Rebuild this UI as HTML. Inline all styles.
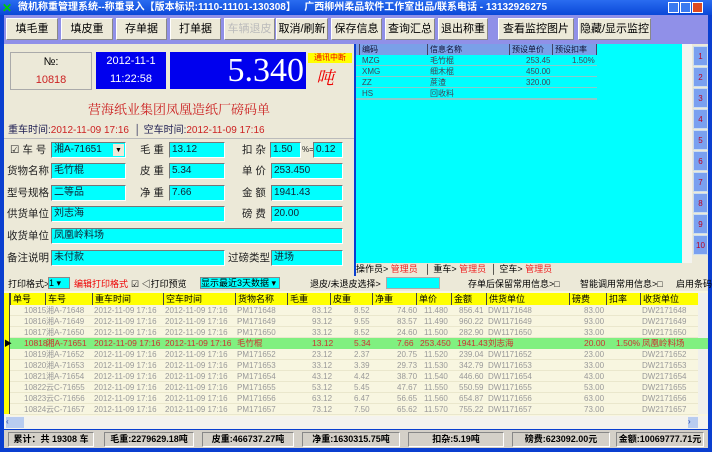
<!DOCTYPE html>
<html><head><meta charset="utf-8">
<style>
*{margin:0;padding:0;box-sizing:border-box;white-space:nowrap}
body{width:712px;height:452px;overflow:hidden;background:#0a3fd0;font-family:"Liberation Sans","Noto Sans CJK SC",sans-serif;font-size:11px;position:relative}
.a{position:absolute}
.title{left:0;top:0;width:712px;height:15px;background:linear-gradient(#2a6cf0,#0a48d8);color:#fff;font-weight:bold;font-size:10px;line-height:15px;padding-left:18px}
.tb{left:4px;top:15px;width:704px;height:29px;background:#9090e8}
.btn{position:absolute;top:3px;height:22px;background:#ece9d8;border:1px solid #fff;border-right-color:#888;border-bottom-color:#888;font-size:11px;line-height:20px;text-align:center}
.panel{left:4px;top:44px;width:350px;height:232px;background:#ece9d8}
.lbl{position:absolute;font-size:10.5px;color:#222;line-height:16px}
.fld{position:absolute;height:16px;background:#00ffff;border:1px solid #fff;border-top-color:#777;border-left-color:#777;font-size:10px;line-height:14px;padding-left:2px;color:#123}
.cyan{left:356px;top:44px;width:326px;height:219px;background:#00ffff}
.gh{position:absolute;top:0;height:11px;background:#7aa0e8;border-right:1px solid #446;font-size:8px;line-height:11px;padding-left:2px;color:#113}
.gr{position:absolute;font-size:8px;line-height:11px;color:#445}
.nb{position:absolute;left:693px;width:15px;height:20px;background:#7aa0f0;border:1px solid #cde;color:#b02;font-size:8px;text-align:center;line-height:20px}
.opt{left:4px;top:276px;width:704px;height:15px;background:#ece9d8;font-size:9px}
.grid{left:4px;top:291px;width:704px;height:138px;background:#f8f6e0}
.hd{position:absolute;top:2px;height:12px;background:#ffff00;border-left:1px solid #444;font-size:9px;line-height:12px;padding-left:2px}
.row{position:absolute;left:0;width:694px;height:11px;font-size:8px;color:#999;line-height:11px}
.row span{position:absolute}
.stat{left:4px;top:430px;width:704px;height:18px;background:#d4d0c8}
.sp{position:absolute;top:2px;height:15px;border:1px solid #888;border-right-color:#fff;border-bottom-color:#fff;font-weight:bold;font-size:9px;line-height:13px;text-align:center}
</style></head><body>
<div class="a title">微机称重管理系统--称重录入【版本标识:1110-11101-130308】 &nbsp;&nbsp;广西柳州柔品软件工作室出品/联系电话 - 13132926275</div>
<div class="a" style="left:2px;top:1px;color:#0c0;font-size:12px;font-weight:bold">✕</div>
<div class="a" style="left:668px;top:2px;width:40px;height:11px;"><span style="display:inline-block;width:11px;height:11px;background:#3a7af0;border:1px solid #fff;margin-right:1px"></span><span style="display:inline-block;width:11px;height:11px;background:#3a7af0;border:1px solid #fff;margin-right:1px"></span><span style="display:inline-block;width:11px;height:11px;background:#e04a20;border:1px solid #fff"></span></div>
<div class="a tb">
<div class="btn" style="left:2px;width:52px">填毛重</div>
<div class="btn" style="left:57px;width:52px">填皮重</div>
<div class="btn" style="left:112px;width:51px">存单据</div>
<div class="btn" style="left:166px;width:51px">打单据</div>
<div class="btn" style="left:220px;width:51px;color:#bbb">车辆退皮</div>
<div class="btn" style="left:272px;width:52px">取消/刷新</div>
<div class="btn" style="left:327px;width:51px">保存信息</div>
<div class="btn" style="left:381px;width:50px">查询汇总</div>
<div class="btn" style="left:434px;width:50px">退出称重</div>
<div class="btn" style="left:494px;width:76px">查看监控图片</div>
<div class="btn" style="left:574px;width:73px">隐藏/显示监控</div>
</div>
<div class="a panel">
<div style="position:absolute;left:6px;top:8px;width:82px;height:38px;border:1px solid #aaa;text-align:center;font-size:11px;line-height:18px">№:<br><span style="color:#c22">10818</span></div>
<div style="position:absolute;left:92px;top:8px;width:70px;height:37px;background:#0000ee;color:#fff;text-align:center;font-size:11px;line-height:18px">2012-11-1<br>11:22:58</div>
<div style="position:absolute;left:166px;top:8px;width:136px;height:37px;background:#0000ee;color:#fff;text-align:right;font-size:34px;line-height:37px;font-family:'Liberation Serif',serif;padding-right:2px">5.340</div>
<div style="position:absolute;left:304px;top:9px;width:44px;height:10px;background:#ff0;color:#e00;font-size:8px;line-height:10px;text-align:center">通讯中断</div>
<div style="position:absolute;left:312px;top:20px;color:#e00;font-size:18px;font-style:italic;font-family:'Noto Serif CJK SC',serif">吨</div>
<div style="position:absolute;left:0;width:350px;top:55px;text-align:center;color:#c22;font-size:13px;font-family:'Noto Serif CJK SC',serif">营海纸业集团凤凰造纸厂磅码单</div>
<div style="position:absolute;left:4px;top:77px;font-size:10px;color:#225">重车时间:<span style="color:#c22">2012-11-09 17:16</span> &nbsp;│ 空车时间:<span style="color:#c22">2012-11-09 17:16</span></div>
<div style="position:absolute;left:0;top:94px;width:350px;border-top:1px solid #bbb"></div>
</div>
<div class="lbl" style="left:10px;top:142px">☑ 车 号</div>
<div class="fld" style="left:51px;top:142px;width:75px">湘A-71651<span style="position:absolute;right:1px;top:1px;width:11px;height:12px;background:#ece9d8;color:#000;font-size:7px;text-align:center">▼</span></div>
<div class="lbl" style="left:140px;top:142px">毛 重</div><div class="fld" style="left:169px;top:142px;width:56px">13.12</div>
<div class="lbl" style="left:242px;top:142px">扣 杂</div><div class="fld" style="left:270px;top:142px;width:31px">1.50</div>
<div class="lbl" style="left:302px;top:142px;font-size:8px">%=</div><div class="fld" style="left:313px;top:142px;width:30px">0.12</div>
<div class="lbl" style="left:7px;top:163px">货物名称</div><div class="fld" style="left:51px;top:163px;width:75px">毛竹棍</div>
<div class="lbl" style="left:140px;top:163px">皮 重</div><div class="fld" style="left:169px;top:163px;width:56px">5.34</div>
<div class="lbl" style="left:242px;top:163px">单 价</div><div class="fld" style="left:271px;top:163px;width:72px">253.450</div>
<div class="lbl" style="left:7px;top:185px">型号规格</div><div class="fld" style="left:51px;top:185px;width:75px">二等品</div>
<div class="lbl" style="left:140px;top:185px">净 重</div><div class="fld" style="left:169px;top:185px;width:56px">7.66</div>
<div class="lbl" style="left:242px;top:185px">金 额</div><div class="fld" style="left:271px;top:185px;width:72px">1941.43</div>
<div class="lbl" style="left:7px;top:206px">供货单位</div><div class="fld" style="left:51px;top:206px;width:174px">刘志海</div>
<div class="lbl" style="left:242px;top:206px">磅 费</div><div class="fld" style="left:271px;top:206px;width:72px">20.00</div>
<div class="lbl" style="left:7px;top:228px">收货单位</div><div class="fld" style="left:51px;top:228px;width:292px">凤凰岭料场</div>
<div class="lbl" style="left:7px;top:250px">备注说明</div><div class="fld" style="left:51px;top:250px;width:174px">未付款</div>
<div class="lbl" style="left:228px;top:250px">过磅类型</div><div class="fld" style="left:271px;top:250px;width:72px">进场</div>

<div class="a cyan">
<div style="position:absolute;left:0;top:11px;width:241px;height:45px;border-bottom:1px solid #8cc;background:repeating-linear-gradient(transparent 0 10px,#8cc 10px 11px)"></div>
<div class="gh" style="left:0;width:4px;padding:0"></div>
<div class="gh" style="left:4px;width:68px">编码</div>
<div class="gh" style="left:72px;width:82px">信息名称</div>
<div class="gh" style="left:154px;width:43px">预设单价</div>
<div class="gh" style="left:197px;width:44px">预设扣率</div>
<div class="gr" style="left:6px;top:11px">MZG</div><div class="gr" style="left:74px;top:11px">毛竹棍</div><div class="gr" style="left:170px;top:11px">253.45</div><div class="gr" style="left:216px;top:11px">1.50%</div>
<div class="gr" style="left:6px;top:22px">XMG</div><div class="gr" style="left:74px;top:22px">细木棍</div><div class="gr" style="left:170px;top:22px">450.00</div>
<div class="gr" style="left:6px;top:33px">ZZ</div><div class="gr" style="left:74px;top:33px">蔗渣</div><div class="gr" style="left:170px;top:33px">320.00</div>
<div class="gr" style="left:6px;top:44px">HS</div><div class="gr" style="left:74px;top:44px">回收料</div>
</div>
<div class="a" style="left:682px;top:44px;width:10px;height:219px;background:#f4f4f0"></div>
<div class="a" style="left:692px;top:44px;width:16px;height:232px;background:#ece9d8"></div>
<div class="nb" style="top:46px">1</div><div class="nb" style="top:67px">2</div><div class="nb" style="top:88px">3</div><div class="nb" style="top:109px">4</div><div class="nb" style="top:130px">5</div><div class="nb" style="top:151px">6</div><div class="nb" style="top:172px">7</div><div class="nb" style="top:193px">8</div><div class="nb" style="top:214px">9</div><div class="nb" style="top:235px">10</div>
<div class="a" style="left:356px;top:263px;width:336px;height:13px;background:#ece9d8;font-size:9px;line-height:13px">操作员&gt; <span style="color:#e22">管理员</span> &nbsp; │ 重车&gt; <span style="color:#e22">管理员</span> &nbsp;│ 空车&gt; <span style="color:#e22">管理员</span></div>

<div class="a opt">
<span class="a" style="left:4px;top:1px">打印格式&gt;</span><span class="a" style="left:44px;top:1px;width:22px;height:12px;background:#0ff;border:1px solid #888;line-height:10px">1 ▾</span>
<span class="a" style="left:70px;top:1px;color:#e00">编辑打印格式</span><span class="a" style="left:127px;top:1px">☑ ◁打印预览</span>
<span class="a" style="left:196px;top:1px;width:80px;height:12px;background:#0ff;border:1px solid #888;line-height:10px">显示最近3天数据 ▾</span>
<span class="a" style="left:306px;top:1px">退皮/未退皮选择&gt;</span><span class="a" style="left:382px;top:1px;width:54px;height:12px;background:#0ff;border:1px solid #aaa"></span>
<span class="a" style="left:464px;top:1px">存单后保留常用信息&gt;□</span><span class="a" style="left:576px;top:1px">智能调用常用信息&gt;□</span><span class="a" style="left:672px;top:1px">启用条码</span>
</div>

<div class="a grid">
<div style="position:absolute;left:0;top:2px;width:6px;height:121px;background:#ff0;border-right:1px solid #444"></div>
<div class="hd" style="left:6px;width:35px">单号</div><div class="hd" style="left:41px;width:47px">车号</div><div class="hd" style="left:88px;width:71px">重车时间</div><div class="hd" style="left:159px;width:72px">空车时间</div><div class="hd" style="left:231px;width:52px">货物名称</div><div class="hd" style="left:283px;width:43px">毛重</div><div class="hd" style="left:326px;width:42px">皮重</div><div class="hd" style="left:368px;width:44px">净重</div><div class="hd" style="left:412px;width:35px">单价</div><div class="hd" style="left:447px;width:35px">金额</div><div class="hd" style="left:482px;width:83px">供货单位</div><div class="hd" style="left:565px;width:37px">磅费</div><div class="hd" style="left:602px;width:34px">扣率</div><div class="hd" style="left:636px;width:58px">收货单位</div>
<div style="position:absolute;left:694px;top:2px;width:10px;height:121px;background:#f0f0ec"></div>
<div style="position:absolute;left:6px;top:14px;width:688px;height:110px;background:repeating-linear-gradient(transparent 0 10.3px,#ddd8b8 10.3px 11px)"></div>
<div class="row" style="top:14px"><span style="left:20px">10815</span><span style="left:42px">湘A-71648</span><span style="left:90px">2012-11-09 17:16</span><span style="left:161px">2012-11-09 17:16</span><span style="left:233px">PM171648</span><span style="left:308px">83.12</span><span style="left:350px">8.52</span><span style="left:393px">74.60</span><span style="left:420px">11.480</span><span style="left:455px">856.41</span><span style="left:484px">DW1171648</span><span style="left:580px">83.00</span><span style="left:638px">DW2171648</span></div>
<div class="row" style="top:25px"><span style="left:20px">10816</span><span style="left:42px">湘A-71649</span><span style="left:90px">2012-11-09 17:16</span><span style="left:161px">2012-11-09 17:16</span><span style="left:233px">PM171649</span><span style="left:308px">93.12</span><span style="left:350px">9.55</span><span style="left:393px">83.57</span><span style="left:420px">11.490</span><span style="left:455px">960.22</span><span style="left:484px">DW1171649</span><span style="left:580px">93.00</span><span style="left:638px">DW2171649</span></div>
<div class="row" style="top:36px"><span style="left:20px">10817</span><span style="left:42px">湘A-71650</span><span style="left:90px">2012-11-09 17:16</span><span style="left:161px">2012-11-09 17:16</span><span style="left:233px">PM171650</span><span style="left:308px">33.12</span><span style="left:350px">8.52</span><span style="left:393px">24.60</span><span style="left:420px">11.500</span><span style="left:455px">282.90</span><span style="left:484px">DW1171650</span><span style="left:580px">33.00</span><span style="left:638px">DW2171650</span></div>
<div class="row" style="top:47px;left:6px;width:698px;background:#80f080;color:#c33;font-size:8.5px"><span style="left:14px">10818</span><span style="left:36px">湘A-71651</span><span style="left:84px">2012-11-09 17:16</span><span style="left:155px">2012-11-09 17:16</span><span style="left:227px">毛竹棍</span><span style="left:302px">13.12</span><span style="left:344px">5.34</span><span style="left:387px">7.66</span><span style="left:410px">253.450</span><span style="left:447px">1941.43</span><span style="left:478px">刘志海</span><span style="left:574px">20.00</span><span style="left:606px">1.50%</span><span style="left:632px">凤凰岭料场</span></div>
<div class="a" style="left:0;top:47px;width:6px;height:11px;font-size:8px;color:#000">▶</div>
<div class="row" style="top:58px"><span style="left:20px">10819</span><span style="left:42px">湘A-71652</span><span style="left:90px">2012-11-09 17:16</span><span style="left:161px">2012-11-09 17:16</span><span style="left:233px">PM171652</span><span style="left:308px">23.12</span><span style="left:350px">2.37</span><span style="left:393px">20.75</span><span style="left:420px">11.520</span><span style="left:455px">239.04</span><span style="left:484px">DW1171652</span><span style="left:580px">23.00</span><span style="left:638px">DW2171652</span></div>
<div class="row" style="top:69px"><span style="left:20px">10820</span><span style="left:42px">湘A-71653</span><span style="left:90px">2012-11-09 17:16</span><span style="left:161px">2012-11-09 17:16</span><span style="left:233px">PM171653</span><span style="left:308px">33.12</span><span style="left:350px">3.39</span><span style="left:393px">29.73</span><span style="left:420px">11.530</span><span style="left:455px">342.79</span><span style="left:484px">DW1171653</span><span style="left:580px">33.00</span><span style="left:638px">DW2171653</span></div>
<div class="row" style="top:80px"><span style="left:20px">10821</span><span style="left:42px">湘A-71654</span><span style="left:90px">2012-11-09 17:16</span><span style="left:161px">2012-11-09 17:16</span><span style="left:233px">PM171654</span><span style="left:308px">43.12</span><span style="left:350px">4.42</span><span style="left:393px">38.70</span><span style="left:420px">11.540</span><span style="left:455px">446.60</span><span style="left:484px">DW1171654</span><span style="left:580px">43.00</span><span style="left:638px">DW2171654</span></div>
<div class="row" style="top:91px"><span style="left:20px">10822</span><span style="left:42px">云C-71655</span><span style="left:90px">2012-11-09 17:16</span><span style="left:161px">2012-11-09 17:16</span><span style="left:233px">PM171655</span><span style="left:308px">53.12</span><span style="left:350px">5.45</span><span style="left:393px">47.67</span><span style="left:420px">11.550</span><span style="left:455px">550.59</span><span style="left:484px">DW1171655</span><span style="left:580px">53.00</span><span style="left:638px">DW2171655</span></div>
<div class="row" style="top:102px"><span style="left:20px">10823</span><span style="left:42px">云C-71656</span><span style="left:90px">2012-11-09 17:16</span><span style="left:161px">2012-11-09 17:16</span><span style="left:233px">PM171656</span><span style="left:308px">63.12</span><span style="left:350px">6.47</span><span style="left:393px">56.65</span><span style="left:420px">11.560</span><span style="left:455px">654.87</span><span style="left:484px">DW1171656</span><span style="left:580px">63.00</span><span style="left:638px">DW2171656</span></div>
<div class="row" style="top:113px"><span style="left:20px">10824</span><span style="left:42px">云C-71657</span><span style="left:90px">2012-11-09 17:16</span><span style="left:161px">2012-11-09 17:16</span><span style="left:233px">PM171657</span><span style="left:308px">73.12</span><span style="left:350px">7.50</span><span style="left:393px">65.62</span><span style="left:420px">11.570</span><span style="left:455px">755.22</span><span style="left:484px">DW1171657</span><span style="left:580px">73.00</span><span style="left:638px">DW2171657</span></div>
<div style="position:absolute;left:0;top:125px;width:704px;height:13px;background:#f4f3ee"><span style="position:absolute;left:2px;top:1px;width:18px;height:11px;background:#b8ccf0;font-size:8px;color:#24a">‹</span><span style="position:absolute;left:684px;top:1px;width:10px;height:11px;background:#b8ccf0;font-size:8px;color:#24a">›</span></div>
</div>

<div class="a stat">
<div class="sp" style="left:4px;width:86px">累计：共 19308 车</div>
<div class="sp" style="left:100px;width:90px">毛重:2279629.18吨</div>
<div class="sp" style="left:198px;width:92px">皮重:466737.27吨</div>
<div class="sp" style="left:298px;width:98px">净重:1630315.75吨</div>
<div class="sp" style="left:404px;width:96px">扣杂:5.19吨</div>
<div class="sp" style="left:508px;width:98px">磅费:623092.00元</div>
<div class="sp" style="left:612px;width:88px">金额:10069777.71元</div>
</div>
</body></html>
